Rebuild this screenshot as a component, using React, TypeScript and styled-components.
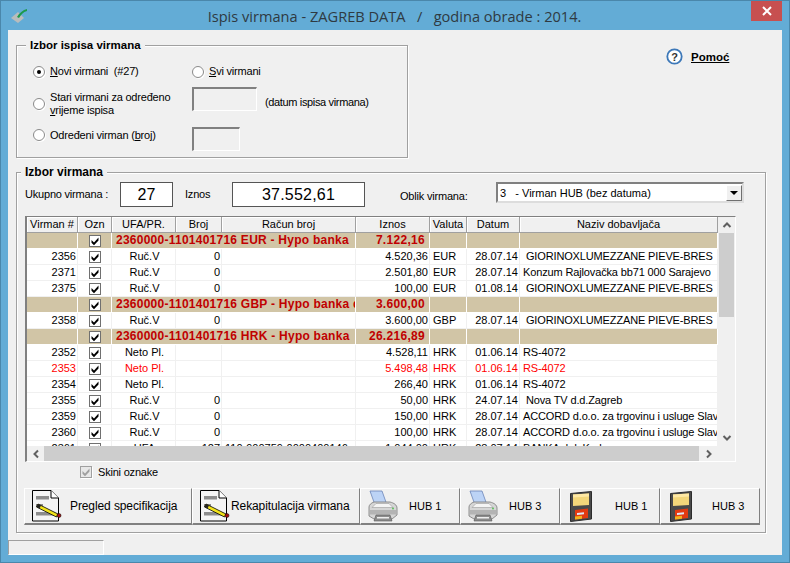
import React from "react";
import styled, { createGlobalStyle } from "styled-components";

const Global = createGlobalStyle`
  html, body { margin: 0; padding: 0; background: #63acd6; }
  * { box-sizing: border-box; }
`;

const Frame = styled.div`
  width: 790px; height: 563px; background: #63acd6; border: 1px solid #4a87ab;
  display: flex; flex-direction: column; overflow: hidden;
  font-family: "Liberation Sans", Arial, sans-serif; font-size: 12px; color: #000;
`;
const TitleBar = styled.div`
  height: 29px; flex: none; display: flex; align-items: flex-start; padding-left: 9px;
`;
const AppIcon = styled.svg`width: 18px; height: 18px; margin-top: 6px; flex: none;`;
const TitleText = styled.div`
  flex: 1; text-align: center; font-family: "Open Sans", sans-serif; font-size: 14.6px; line-height: 30px;
  color: #2f3a42; white-space: pre; margin-left: 10px;
`;
const CloseBtn = styled.div`
  width: 31px; height: 20px; background: #c75050; color: #fff; flex: none; margin-right: 7px;
  display: flex; align-items: center; justify-content: center;
`;
const Client = styled.div`
  width: 774px; height: 525px; margin-left: 7px; background: #f0f0f0; display: flex; flex-direction: column;
  padding: 15px 0 0 8px; position: relative;
`;
const TopRow = styled.div`display: flex; align-items: flex-start;`;
const Group = styled.div<{ $w: number; $h: number; $mt?: number }>`
  position: relative; width: ${p => p.$w}px; height: ${p => p.$h}px; flex: none; margin-top: ${p => p.$mt || 0}px;
  border: 1px solid #a0a0a0; box-shadow: 1px 1px 0 #fff, inset 1px 1px 0 #fff;
`;
const Legend = styled.div<{ $x: number; $size: number }>`
  position: absolute; left: ${p => p.$x}px; top: -8px; background: #f0f0f0; padding: 0 4px; font-weight: bold;
  font-size: ${p => p.$size}px; line-height: 14px; white-space: nowrap; color: #000;
`;
const Options = styled.div`display: flex; flex-direction: column; padding: 17px 0 0 16px;`;
const OptionRow = styled.div<{ $h: number; $mt?: number }>`
  display: flex; height: ${p => p.$h}px; align-items: center; margin-top: ${p => p.$mt || 0}px;
`;
const OptionCell = styled.div<{ $shift?: number }>`
  display: flex; align-items: center; width: 159px; flex: none; gap: 5px;
  margin-top: ${p => Math.max(p.$shift || 0, 0)}px; margin-bottom: ${p => Math.max(-(p.$shift || 0), 0)}px;
`;
const OptionCellLast = styled(OptionCell)`width: auto;`;
const Radio = styled.span<{ $on?: boolean }>`
  width: 12px; height: 12px; border-radius: 50%; flex: none; background: #fff; border: 1px solid #8a8a8a;
  box-shadow: 1px 1px 0 #fff; display: flex; align-items: center; justify-content: center;
  &::after { content: ""; width: 4px; height: 4px; border-radius: 50%; background: ${p => (p.$on ? "#000" : "transparent")}; }
`;
const Label = styled.span`line-height: 13px; font-size: 11px; letter-spacing: -.2px; white-space: pre;`;
const Sunken = styled.div<{ $w: number; $h: number }>`
  width: ${p => p.$w}px; height: ${p => p.$h}px; flex: none; background: #f0f0f0;
  border: 1px solid #fff; border-top: 2px solid #808080; border-left: 2px solid #808080;
`;
const Hint = styled.span`font-size: 11px; letter-spacing: -.35px; margin: 6px 0 0 8px; white-space: nowrap;`;
const U = styled.span`text-decoration: underline;`;
const Help = styled.div`display: flex; align-items: center; gap: 8px; margin: 3px 0 0 258px;`;
const HelpLink = styled.span`text-decoration: underline; font-size: 11.5px; font-weight: bold;`;

const Summary = styled.div`display: flex; align-items: flex-start; height: 43px; padding: 9px 0 0 8px;`;
const SumLabel = styled.span<{ $w: number; $pl?: number }>`
  width: ${p => p.$w}px; padding-left: ${p => p.$pl || 0}px; flex: none; font-size: 11px; letter-spacing: -.2px; line-height: 24px; white-space: nowrap;
`;
const SumBox = styled.div<{ $w: number }>`
  width: ${p => p.$w}px; height: 25px; flex: none; background: #fff; border: 1px solid #555; text-align: center;
  font-size: 16px; line-height: 23px; letter-spacing: .2px;
`;
const OblikLabel = styled.span`width: 96px; flex: none; margin-left: 35px; padding-top: 7px; font-size: 11px; letter-spacing: -.2px; line-height: 14px; white-space: nowrap;`;
const Combo = styled.div`
  width: 248px; height: 21px; flex: none; background: #fff; border: 2px solid #808080; border-right-color: #ddd; border-bottom-color: #ddd;
  display: flex; align-items: center; justify-content: space-between; font-size: 11px; white-space: pre; padding-left: 2px;
`;
const ComboBtn = styled.span`
  width: 16px; height: 16px; background: #f0f0f0; border: 1px solid #707070; border-top-color: #fff; border-left-color: #fff;
  display: flex; align-items: center; justify-content: center;
  &::after { content: ""; border: 4px solid transparent; border-top: 4px solid #000; border-bottom: 0; }
`;

const Grid = styled.div`
  width: 711px; height: 246px; margin-left: 8px; flex: none; display: flex; flex-direction: column;
  background: #f0f0f0; border: 2px solid #808080; border-top-width: 1px; border-right: 1px solid #fff; border-bottom: 1px solid #fff;
`;
const GridMain = styled.div`display: flex; height: 229px; flex: none;`;
const GridBody = styled.div`width: 691px; flex: none; overflow: hidden;`;
const COLS = "51px 34px 64px 46px 134px 74px 37px 53px 198px";
const HeadRow = styled.div`display: grid; grid-template-columns: ${COLS}; height: 16px;`;
const HeadCell = styled.div`
  text-align: center; font-size: 11px; line-height: 15px; background: #f0f0f0; border-right: 1px solid #a0a0a0; border-bottom: 1px solid #a0a0a0;
  box-shadow: inset 1px 1px 0 #fff; white-space: nowrap; overflow: hidden;
`;
const Row = styled.div<{ $band?: boolean; $red?: boolean }>`
  display: grid; grid-template-columns: ${COLS}; height: 16px; background: ${p => (p.$band ? "#d1c5a6" : "#fff")};
  border-bottom: 1px solid ${p => (p.$band ? "#fff" : "#f0f0f0")}; color: ${p => (p.$red ? "#f00" : "#000")};
`;
const Cell = styled.div<{ $align?: string; $band?: boolean }>`
  font-size: 11px; line-height: 15px; height: 15px; white-space: pre; overflow: hidden; text-align: ${p => p.$align || "left"};
  border-right: 1px solid ${p => (p.$band ? "#fff" : "#f0f0f0")}; padding: 0 1px 0 3px;
`;
const NameCell = styled(Cell)`letter-spacing: -.14px;`;
const BandTitle = styled(Cell)`
  grid-column: span 3; color: #c00000; font-weight: bold; font-size: 12px; letter-spacing: .25px; padding-left: 4px;
`;
const BandAmount = styled(Cell)`color: #c00000; font-weight: bold; font-size: 12px; letter-spacing: .3px; padding-right: 4px;`;
const CheckCell = styled(Cell)`display: flex; align-items: center; justify-content: center; padding: 0;`;
const Check = styled.span<{ $off?: boolean }>`
  width: 12px; height: 12px; flex: none; background: ${p => (p.$off ? "#e8e8e8" : "#fff")}; border: 1px solid #707070; display: flex;
  ${p => p.$off && "border-color:#a0a0a0; box-shadow: 1px 1px 0 #fff;"}
`;
const CheckSvg = styled.svg`width: 10px; height: 10px;`;

const VBar = styled.div`width: 17px; flex: none; display: flex; flex-direction: column; background: #f0f0f0;`;
const VArrow = styled.div`height: 16px; flex: none; display: flex; align-items: center; justify-content: center;`;
const VThumb = styled.div`height: 84px; flex: none; background: #cdcdcd; margin: 0 1px;`;
const VTrack = styled.div`flex: 1;`;
const HBar = styled.div`display: flex; height: 15px; flex: none; width: 691px; background: #f0f0f0;`;
const HArrow = styled.div<{ $w: number }>`width: ${p => p.$w}px; flex: none; display: flex; align-items: center; justify-content: center;`;
const HThumb = styled.div`flex: 1; background: #cdcdcd;`;
const ArrowSvg = styled.svg`width: 10px; height: 10px;`;

const SkipRow = styled.div`display: flex; align-items: center; gap: 6px; height: 16px; margin: 2px 0 0 63px;`;
const Toolbar = styled.div`display: flex; margin: 8px 0 0 7px;`;
const Btn = styled.div<{ $w: number; $gap: number; $small?: boolean }>`
  width: ${p => p.$w}px; height: 37px; flex: none; display: flex; align-items: center; background: #f0f0f0; padding-left: 7px;
  border: 1px solid #fff; border-right: 1px solid #808080; border-bottom: 2px solid #808080; gap: ${p => p.$gap}px;
  font-size: ${p => (p.$small ? 11 : 12)}px; letter-spacing: ${p => (p.$small ? 0 : -0.1)}px; white-space: nowrap; color: #000;
`;
const Status = styled.div`
  position: absolute; left: 0; bottom: 0; width: 96px; height: 15px; border: 1px solid #a0a0a0; border-right-color: #fff; border-bottom-color: #fff;
`;
const IconWrap = styled.svg<{ $ml?: number }>`flex: none; margin-left: ${p => p.$ml || 0}px;`;

const Tick = ({ c = "#000" }: { c?: string }) => (
  <CheckSvg viewBox="0 0 10 10"><path d="M1.5 4 4 6.4 8.5 1.4V4.4L4 9.2 1.5 6.8Z" fill={c} /></CheckSvg>
);

const DocIcon = () => (
  <IconWrap width="30" height="32" viewBox="0 0 30 32">
    <path d="M.5.5H19L26.5 8V31H.5Z" fill="#f4f4f4" stroke="#000" />
    <path d="M19 .5V8H26.5" fill="#fff" stroke="#000" />
    <rect x="4" y="6" width="13" height="3.5" fill="#8c8c8c" />
    <rect x="4" y="14" width="7" height="3" fill="#8c8c8c" />
    <rect x="4" y="22" width="19" height="3.5" fill="#8c8c8c" />
    <path d="M6 14 26 24 24.5 27 4.5 17Z" fill="#f2e318" stroke="#000" strokeWidth=".8" />
    <path d="M6 14 9 15.5 7.5 18.5 4.5 17Z" fill="#222" />
    <circle cx="27" cy="25.5" r="2" fill="#a01010" stroke="#000" strokeWidth=".5" />
  </IconWrap>
);
const PrinterIcon = () => (
  <IconWrap width="30" height="32" viewBox="0 0 30 32">
    <path d="M2 1H14L19 15H7Z" fill="#bcd3f6" stroke="#6b84b8" strokeWidth=".8" />
    <path d="M1 17C1 15 3 13 6 12H22C26 13 29 15 29 18V25L24 29H6L1 26Z" fill="#d6d6d6" stroke="#777" strokeWidth=".8" />
    <path d="M4 17.5 8 13.5H21L25 17.5Z" fill="#f4f4f4" stroke="#9a9a9a" strokeWidth=".6" />
    <rect x="2" y="20" width="26" height="4.5" fill="#b4b4b4" />
    <circle cx="25" cy="18.5" r="1" fill="#5cc15c" />
    <path d="M8 25H22L24 31H6Z" fill="#8d8d8d" stroke="#555" strokeWidth=".6" />
    <rect x="9" y="27" width="12" height="1.5" fill="#eee" />
  </IconWrap>
);
const FloppyIcon = () => (
  <IconWrap width="24" height="31" viewBox="0 0 24 31" $ml={2}>
    <path d="M.5 2.5 21.5.5V28L.5 30.5Z" fill="#4a4a4a" stroke="#2c2c2c" />
    <path d="M3 3.5 19 2.5V14L3 15Z" fill="#f4d77a" />
    <path d="M3 3.5 19 2.5V5.5L3 6.5Z" fill="#ffe9a4" />
    <path d="M5 19 18 17.5V27L5 28.5Z" fill="#e33a10" />
    <path d="M7 22 14 21.2V23.2L7 24Z" fill="#dfe7f7" />
    <path d="M5 25.5 12 24.8V27.8L5 28.5Z" fill="#f2b21c" />
  </IconWrap>
);

type R = { v: string; u: string; b: string; r: string; a: string; c: string; d: string; n: string; red?: boolean };
type Item = { band: string; amount: string } | R;
const giorin = " GIORINOXLUMEZZANE PIEVE-BRES";
const accord = "ACCORD d.o.o. za trgovinu i usluge Slav";
const rows: Item[] = [
  { band: "2360000-1101401716 EUR - Hypo banka", amount: "7.122,16" },
  { v: "2356", u: "Ruč.V", b: "0", r: "", a: "4.520,36", c: "EUR", d: "28.07.14", n: giorin },
  { v: "2371", u: "Ruč.V", b: "0", r: "", a: "2.501,80", c: "EUR", d: "28.07.14", n: "Konzum Rajlovačka bb71 000 Sarajevo" },
  { v: "2375", u: "Ruč.V", b: "0", r: "", a: "100,00", c: "EUR", d: "01.08.14", n: giorin },
  { band: "2360000-1101401716 GBP - Hypo banka d.d.", amount: "3.600,00" },
  { v: "2358", u: "Ruč.V", b: "0", r: "", a: "3.600,00", c: "GBP", d: "28.07.14", n: giorin },
  { band: "2360000-1101401716 HRK - Hypo banka", amount: "26.216,89" },
  { v: "2352", u: "Neto Pl.", b: "", r: "", a: "4.528,11", c: "HRK", d: "01.06.14", n: "RS-4072" },
  { v: "2353", u: "Neto Pl.", b: "", r: "", a: "5.498,48", c: "HRK", d: "01.06.14", n: "RS-4072", red: true },
  { v: "2354", u: "Neto Pl.", b: "", r: "", a: "266,40", c: "HRK", d: "01.06.14", n: "RS-4072" },
  { v: "2355", u: "Ruč.V", b: "0", r: "", a: "50,00", c: "HRK", d: "24.07.14", n: " Nova TV d.d.Zagreb" },
  { v: "2359", u: "Ruč.V", b: "0", r: "", a: "150,00", c: "HRK", d: "28.07.14", n: accord },
  { v: "2360", u: "Ruč.V", b: "0", r: "", a: "100,00", c: "HRK", d: "28.07.14", n: accord },
  { v: "2361", u: "UFA", b: "127", r: "110-900759-0000400146", a: "1.044,00", c: "HRK", d: "28.07.14", n: "BANKA d.d. Karlovac" },
];
const heads = ["Virman #", "Ozn", "UFA/PR.", "Broj", "Račun broj", "Iznos", "Valuta", "Datum", "Naziv dobavljača"];

export default function App() {
  return (
    <Frame>
      <Global />
      <TitleBar>
        <AppIcon viewBox="0 0 18 18">
          <path d="M1 11 8 5 14 11 8 16Z" fill="#b9bcbc" />
          <path d="M7 10C9 6 13 3 17 2L17 4C13 5 11 8 9 11Z" fill="#1c9a4a" />
        </AppIcon>
        <TitleText>{"Ispis virmana - ZAGREB DATA   /   godina obrade : 2014."}</TitleText>
        <CloseBtn>
          <svg width="10" height="10" viewBox="0 0 10 10"><path d="M1 1 9 9M9 1 1 9" stroke="#fff" strokeWidth="2" /></svg>
        </CloseBtn>
      </TitleBar>
      <Client>
        <TopRow>
          <Group $w={392} $h={113}>
            <Legend $x={9} $size={11.5}>Izbor ispisa virmana</Legend>
            <Options>
              <OptionRow $h={17}>
                <OptionCell><Radio $on /><Label><U>N</U>ovi virmani  (#27)</Label></OptionCell>
                <OptionCellLast><Radio /><Label><U>S</U>vi virmani</Label></OptionCellLast>
              </OptionRow>
              <OptionRow $h={37}>
                <OptionCell $shift={10}><Radio /><Label>{"Stari virmani za određeno\n"}<U>v</U>rijeme ispisa</Label></OptionCell>
                <Sunken $w={65} $h={24} />
                <Hint>(datum ispisa virmana)</Hint>
              </OptionRow>
              <OptionRow $h={36} $mt={4}>
                <OptionCell $shift={-8}><Radio /><Label>Određeni virman (<U>b</U>roj)</Label></OptionCell>
                <Sunken $w={48} $h={24} />
              </OptionRow>
            </Options>
          </Group>
          <Help>
            <svg width="17" height="17" viewBox="0 0 17 17">
              <circle cx="8.5" cy="8.5" r="7.2" fill="#fff" stroke="#3d78b8" strokeWidth="1.8" />
              <text x="8.5" y="12.5" textAnchor="middle" fontSize="11" fontWeight="bold" fontFamily="Liberation Sans" fill="#333">?</text>
            </svg>
            <HelpLink>Pomoć</HelpLink>
          </Help>
        </TopRow>
        <Group $w={750} $h={361} $mt={14}>
          <Legend $x={4} $size={12}>Izbor virmana</Legend>
          <Summary>
            <SumLabel $w={95}>Ukupno virmana :</SumLabel>
            <SumBox $w={53}>27</SumBox>
            <SumLabel $w={59} $pl={12}>Iznos</SumLabel>
            <SumBox $w={133}>37.552,61</SumBox>
            <OblikLabel>Oblik virmana:</OblikLabel>
            <Combo>{"3   - Virman HUB (bez datuma)"}<ComboBtn /></Combo>
          </Summary>
          <Grid>
            <GridMain>
              <GridBody>
                <HeadRow>{heads.map(h => <HeadCell key={h}>{h}</HeadCell>)}</HeadRow>
                {rows.map((r, i) =>
                  "band" in r ? (
                    <Row $band key={i}>
                      <Cell $band />
                      <CheckCell $band><Check><Tick /></Check></CheckCell>
                      <BandTitle $band>{r.band}</BandTitle>
                      <BandAmount $band $align="right">{r.amount}</BandAmount>
                      <Cell $band /><Cell $band /><Cell $band />
                    </Row>
                  ) : (
                    <Row key={i} $red={r.red}>
                      <Cell $align="right">{r.v}</Cell>
                      <CheckCell><Check><Tick /></Check></CheckCell>
                      <Cell $align="center">{r.u}</Cell>
                      <Cell $align="right">{r.b}</Cell>
                      <Cell>{r.r}</Cell>
                      <Cell $align="right">{r.a}</Cell>
                      <Cell>{r.c}</Cell>
                      <Cell $align="right">{r.d}</Cell>
                      <NameCell>{r.n}</NameCell>
                    </Row>
                  )
                )}
              </GridBody>
              <VBar>
                <VArrow><ArrowSvg viewBox="0 0 10 10"><path d="M1.5 7 5 3.5 8.5 7" fill="none" stroke="#606060" strokeWidth="2" /></ArrowSvg></VArrow>
                <VThumb />
                <VTrack />
                <VArrow><ArrowSvg viewBox="0 0 10 10"><path d="M1.5 3 5 6.5 8.5 3" fill="none" stroke="#606060" strokeWidth="2" /></ArrowSvg></VArrow>
              </VBar>
            </GridMain>
            <HBar>
              <HArrow $w={17}><ArrowSvg viewBox="0 0 10 10"><path d="M7 1.5 3.5 5 7 8.5" fill="none" stroke="#606060" strokeWidth="2" /></ArrowSvg></HArrow>
              <HThumb />
              <HArrow $w={19}><ArrowSvg viewBox="0 0 10 10"><path d="M3 1.5 6.5 5 3 8.5" fill="none" stroke="#606060" strokeWidth="2" /></ArrowSvg></HArrow>
            </HBar>
          </Grid>
          <SkipRow>
            <Check $off><Tick c="#a0a0a0" /></Check>
            <Label>Skini oznake</Label>
          </SkipRow>
          <Toolbar>
            <Btn $w={168} $gap={8}><DocIcon />Pregled specifikacija</Btn>
            <Btn $w={168} $gap={1}><DocIcon />Rekapitulacija virmana</Btn>
            <Btn $w={100} $gap={11} $small><PrinterIcon />HUB 1</Btn>
            <Btn $w={100} $gap={11} $small><PrinterIcon />HUB 3</Btn>
            <Btn $w={100} $gap={21} $small><FloppyIcon />HUB 1</Btn>
            <Btn $w={100} $gap={18} $small><FloppyIcon />HUB 3</Btn>
          </Toolbar>
        </Group>
        <Status />
      </Client>
    </Frame>
  );
}
